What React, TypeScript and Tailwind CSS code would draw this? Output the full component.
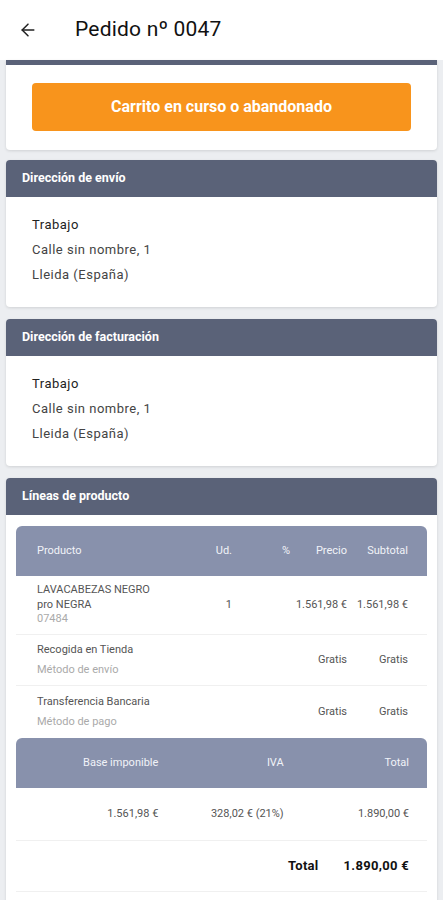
import React from 'react';
import { ArrowLeft } from 'lucide-react';

const font = { fontFamily: 'Roboto, "Liberation Sans", sans-serif' };

function CardHeader({ title }: { title: string }) {
  return (
    <div className="h-[37px] bg-[#5a6278] rounded-t-[4px] flex items-center px-4">
      <span className="text-white text-[12.5px] font-bold">{title}</span>
    </div>
  );
}

function AddressCard({ title }: { title: string }) {
  return (
    <div className="mx-[6px] mb-3 bg-white rounded-[4px] shadow-[0_1px_3px_rgba(0,0,0,0.12)]">
      <CardHeader title={title} />
      <div className="pt-[15px] pb-[20px] px-[26px] text-[13px] leading-[25px] tracking-[0.5px]">
        <div className="text-[#222]">Trabajo</div>
        <div className="text-[#444]">Calle sin nombre, 1</div>
        <div className="text-[#444]">Lleida (España)</div>
      </div>
    </div>
  );
}

const lineCols = 'grid grid-cols-[163px_32px_58px_57px_61px] items-center';

function App() {
  return (
    <div className="min-h-screen bg-[#eceef1]" style={font}>
      {/* app bar */}
      <div className="h-[60px] bg-white flex items-center">
        <ArrowLeft size={20} strokeWidth={1.8} className="ml-[18px] text-[#222]" />
        <h1 className="ml-[37px] text-[21px] text-[#111] tracking-[0.2px]">Pedido nº 0047</h1>
      </div>

      {/* status card (header scrolled under the bar) */}
      <div className="mx-[6px] mb-[10px] bg-white rounded-b-[4px] shadow-[0_1px_3px_rgba(0,0,0,0.12)]">
        <div className="h-[5px] bg-[#5a6278]" />
        <div className="pt-[18px] pb-[19px] px-[26px]">
          <div className="h-[48px] rounded-[4px] bg-[#f8941c] flex items-center justify-center">
            <span className="text-white text-[16px] font-bold">Carrito en curso o abandonado</span>
          </div>
        </div>
      </div>

      <AddressCard title="Dirección de envío" />
      <AddressCard title="Dirección de facturación" />

      {/* product lines */}
      <div className="mx-[6px] bg-white rounded-[4px] shadow-[0_1px_3px_rgba(0,0,0,0.12)] pb-4">
        <CardHeader title="Líneas de producto" />
        <div className="mx-[10px] mt-[11px]">
          <div className={`${lineCols} h-[50px] bg-[#8891ac] rounded-t-[6px] pl-[21px] pr-[18px] text-[11px] text-[#f1f3f8]`}>
            <span>Producto</span>
            <span className="text-right">Ud.</span>
            <span className="text-right">%</span>
            <span className="text-right">Precio</span>
            <span className="text-right">Subtotal</span>
          </div>

          <div className={`${lineCols} h-[59px] pl-[21px] pr-[18px] border-b border-[#f0f0f0] text-[11px] text-[#555]`}>
            <div className="leading-[14.5px]">
              <div>LAVACABEZAS NEGRO</div>
              <div>pro NEGRA</div>
              <div className="text-[#aaa]">07484</div>
            </div>
            <span className="text-right">1</span>
            <span />
            <span className="text-right">1.561,98 €</span>
            <span className="text-right">1.561,98 €</span>
          </div>

          <div className={`${lineCols} h-[51px] pl-[21px] pr-[18px] border-b border-[#f0f0f0] text-[11px] text-[#555]`}>
            <div className="leading-[20px]">
              <div>Recogida en Tienda</div>
              <div className="text-[#aaa]">Método de envío</div>
            </div>
            <span />
            <span />
            <span className="text-right">Gratis</span>
            <span className="text-right">Gratis</span>
          </div>

          <div className={`${lineCols} h-[52px] pl-[21px] pr-[18px] text-[11px] text-[#555]`}>
            <div className="leading-[20px]">
              <div>Transferencia Bancaria</div>
              <div className="text-[#aaa]">Método de pago</div>
            </div>
            <span />
            <span />
            <span className="text-right">Gratis</span>
            <span className="text-right">Gratis</span>
          </div>

          <div className="grid grid-cols-3 h-[50px] items-center bg-[#8891ac] rounded-t-[6px] pl-[17px] pr-[18px] text-[11px] text-[#f1f3f8]">
            <span className="text-right">Base imponible</span>
            <span className="text-right">IVA</span>
            <span className="text-right">Total</span>
          </div>
          <div className="grid grid-cols-3 h-[53px] items-center pl-[17px] pr-[18px] border-b border-[#f0f0f0] text-[11px] text-[#555]">
            <span className="text-right">1.561,98 €</span>
            <span className="text-right">328,02 € (21%)</span>
            <span className="text-right">1.890,00 €</span>
          </div>
          <div className="flex h-[51px] items-center justify-end gap-[25px] pr-[18px] border-b border-[#f0f0f0] text-[13px] font-bold text-[#111] tracking-[0.3px]">
            <span>Total</span>
            <span>1.890,00 €</span>
          </div>
          <div className="h-10" />
        </div>
      </div>
    </div>
  );
}

export default App;
